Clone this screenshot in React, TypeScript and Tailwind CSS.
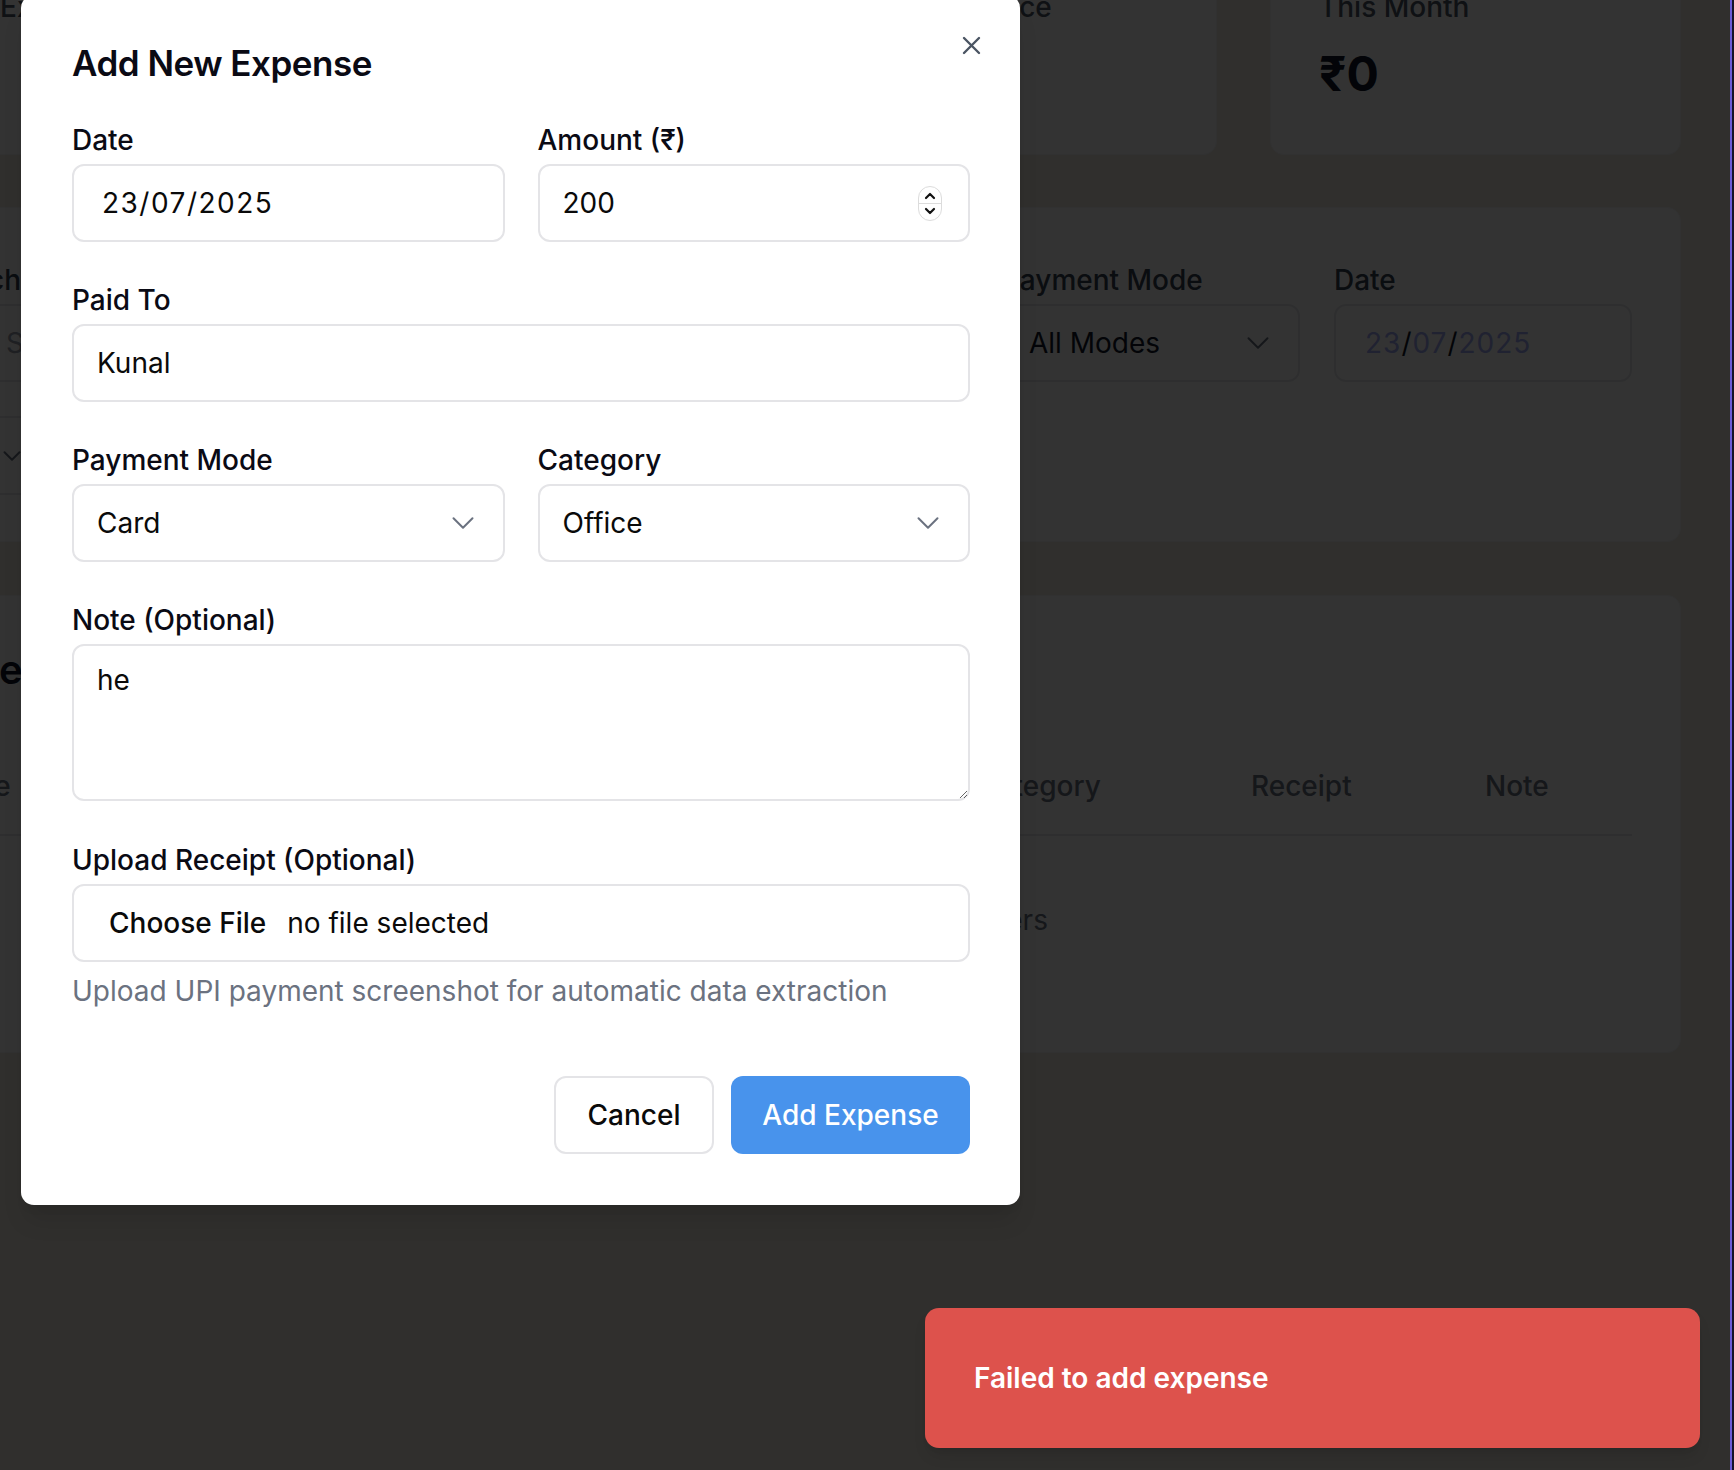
import { ChevronDown, Search } from "lucide-react";

const font = { fontFamily: "Inter, 'Noto Sans', sans-serif" };

function StatCard({ label, value }: { label: string; value: string }) {
  return (
    <div className="bg-white rounded-[14px] border border-gray-100 px-[48px] pt-[48px] pb-[52px]">
      <div className="text-[28px] leading-[40px] font-medium text-gray-600">{label}</div>
      <div className="mt-[19px] text-[48px] leading-[56px] font-bold text-gray-900">{value}</div>
    </div>
  );
}

function Background() {
  const headers = ["Date", "Paid To", "Amount", "Payment Mode", "Category", "Receipt", "Note"];
  return (
    <div className="w-[1803px] ml-[-122px] mt-[-62px] flex flex-col">
      <div className="grid grid-cols-4 gap-[53px]">
        <StatCard label="Total Expenses" value="₹0" />
        <StatCard label="Transactions" value="0" />
        <StatCard label="Wallet Balance" value="₹0" />
        <StatCard label="This Month" value="₹0" />
      </div>

      <div className="mt-[52px] bg-white rounded-[14px] border border-gray-100 px-[48px] pt-[52px] pb-[46px]">
        <div className="grid grid-cols-[1fr_298px_298px_298px] gap-x-[34px] gap-y-[34px]">
          <div>
            <div className="text-[28px] leading-[40px] font-medium text-gray-700 mb-[4px]">Search</div>
            <div className="relative h-[78px] border-2 border-gray-200 rounded-[12px] flex items-center pl-[77px]">
              <Search size={28} className="absolute left-[24px] text-gray-400" />
              <span className="text-[28px] text-gray-400">Search by paid to or note...</span>
            </div>
          </div>
          <div>
            <div className="text-[28px] leading-[40px] font-medium text-gray-700 mb-[4px]">Category</div>
            <div className="h-[78px] border-2 border-gray-200 rounded-[12px] flex items-center justify-between pl-[25px] pr-[21px]">
              <span className="text-[28px] text-gray-900">All Categories</span>
              <ChevronDown size={38} absoluteStrokeWidth strokeWidth={2} className="text-gray-500" />
            </div>
          </div>
          <div>
            <div className="text-[28px] leading-[40px] font-medium text-gray-700 mb-[4px]">Payment Mode</div>
            <div className="h-[78px] border-2 border-gray-200 rounded-[12px] flex items-center justify-between pl-[25px] pr-[21px]">
              <span className="text-[28px] text-gray-900">All Modes</span>
              <ChevronDown size={38} absoluteStrokeWidth strokeWidth={2} className="text-gray-500" />
            </div>
          </div>
          <div>
            <div className="text-[28px] leading-[40px] font-medium text-gray-700 mb-[4px]">Date</div>
            <div className="h-[78px] border-2 border-gray-200 rounded-[12px] flex items-center pl-[29px] text-[28px] tracking-[1px]">
              <span className="text-[#9eaaf5]">23</span>
              <span className="text-gray-900">/</span>
              <span className="text-[#9eaaf5]">07</span>
              <span className="text-gray-900">/</span>
              <span className="text-[#9eaaf5]">2025</span>
            </div>
          </div>
          <div className="w-[132px] h-[79px] border-2 border-gray-200 rounded-[12px] flex items-center justify-end pr-[30px]">
            <ChevronDown size={30} absoluteStrokeWidth strokeWidth={2} className="text-gray-500" />
          </div>
        </div>
      </div>

      <div className="mt-[53px] bg-white rounded-[14px] border border-gray-100 p-[48px]">
        <h2 className="text-[40px] leading-[52px] font-semibold text-gray-900">Expenses</h2>
        <div className="mt-[42px]">
          <div className="grid grid-cols-[257px_257px_257px_257px_274px_234px_171px] border-b-2 border-gray-200">
            {headers.map((h) => (
              <div key={h} className="px-[22px] py-[28px] text-[28px] leading-[40px] font-medium text-gray-500">
                {h}
              </div>
            ))}
          </div>
          <div className="py-[64px] text-center text-[28px] leading-[40px] text-gray-500">
            No expenses found matching your filters
          </div>
        </div>
      </div>
    </div>
  );
}

function Field({ label, children }: { label: string; children: React.ReactNode }) {
  return (
    <div>
      <label className="block text-[28px] leading-[40px] font-medium text-[#0a0a14] mb-[4px]">{label}</label>
      {children}
    </div>
  );
}

const inputCls =
  "w-full h-[78px] border-2 border-[#e4e4e7] rounded-[12px] px-[23px] text-[28px] text-[#0a0a0a] bg-white outline-none";

function SelectBox({ value }: { value: string }) {
  return (
    <div className="relative">
      <select defaultValue={value} className={`${inputCls} appearance-none`}>
        <option>{value}</option>
      </select>
      <ChevronDown
        size={38}
        absoluteStrokeWidth
        strokeWidth={2}
        className="absolute right-[23px] top-[20px] text-[#6b7280] pointer-events-none"
      />
    </div>
  );
}

function Modal() {
  return (
    <div className="absolute left-[21px] top-[-5px] w-[999px] bg-white rounded-[13px] shadow-xl pl-[51px] pr-[50px] pt-[48px] pb-[51px]">
      <button className="absolute right-[39px] top-[41px] text-[#4b5563]">
        <svg width="19" height="19" viewBox="0 0 19 19" fill="none" stroke="currentColor" strokeWidth="2.4" strokeLinecap="round">
          <path d="M2 2 L17 17 M17 2 L2 17" />
        </svg>
      </button>
      <h2 className="text-[35px] leading-[40px] font-semibold text-[#0a0a14] tracking-[-0.5px]">Add New Expense</h2>

      <div className="mt-[37px] flex flex-col gap-[38px]">
        <div className="grid grid-cols-2 gap-x-[33px]">
          <Field label="Date">
            <input readOnly value="23/07/2025" className={`${inputCls} pl-[28px] tracking-[1.5px]`} />
          </Field>
          <Field label="Amount (₹)">
            <div className="relative">
              <input readOnly value="200" className={inputCls} />
              <div className="absolute right-[28px] top-[22px] w-[24px] h-[35px] rounded-full border border-[#dcdcdc] flex flex-col items-center justify-center">
                <svg width="12" height="8" viewBox="0 0 12 8" fill="none" stroke="#111" strokeWidth="2.2" strokeLinecap="round" strokeLinejoin="round">
                  <path d="M2 6 L6 2 L10 6" />
                </svg>
                <div className="w-full h-px bg-[#dcdcdc] my-[3px]" />
                <svg width="12" height="8" viewBox="0 0 12 8" fill="none" stroke="#111" strokeWidth="2.2" strokeLinecap="round" strokeLinejoin="round">
                  <path d="M2 2 L6 6 L10 2" />
                </svg>
              </div>
            </div>
          </Field>
        </div>

        <Field label="Paid To">
          <input readOnly value="Kunal" className={inputCls} />
        </Field>

        <div className="grid grid-cols-2 gap-x-[33px]">
          <Field label="Payment Mode">
            <SelectBox value="Card" />
          </Field>
          <Field label="Category">
            <SelectBox value="Office" />
          </Field>
        </div>

        <Field label="Note (Optional)">
          <textarea
            readOnly
            value="he"
            className="block w-full h-[157px] border-2 border-[#e4e4e7] rounded-[12px] px-[23px] py-[14px] text-[28px] leading-[40px] text-[#0a0a0a] outline-none"
          />
        </Field>

        <div className="mt-[1px]">
          <Field label="Upload Receipt (Optional)">
            <div className="h-[78px] border-2 border-[#e4e4e7] rounded-[12px] flex items-center pl-[35px] text-[28px]">
              <span className="font-medium text-[#0a0a0a]">Choose File</span>
              <span className="ml-[21px] text-[#0a0a0a]">no file selected</span>
            </div>
          </Field>
          <p className="mt-[9px] text-[28px] leading-[40px] text-[#6b7280]">
            Upload UPI payment screenshot for automatic data extraction
          </p>
        </div>
      </div>

      <div className="mt-[65px] flex justify-end gap-[17px]">
        <button className="w-[160px] h-[78px] border-2 border-[#e4e4e7] rounded-[12px] text-[28px] font-medium text-[#0a0a0a] bg-white">
          Cancel
        </button>
        <button className="w-[239px] h-[78px] rounded-[12px] text-[28px] font-medium text-white bg-[#4893ec]">
          Add Expense
        </button>
      </div>
    </div>
  );
}

export default function App() {
  return (
    <div className="w-[1734px] h-[1470px] flex overflow-hidden" style={font}>
      <div className="relative w-[1730px] h-full overflow-hidden bg-[#f0ebe2]">
        <Background />
        <div className="absolute inset-0 bg-black/80" />
        <Modal />
        <div className="absolute left-[925px] top-[1308px] w-[775px] h-[140px] rounded-[14px] bg-[#dd524c] shadow-lg flex items-center pl-[49px]">
          <span className="text-[28px] font-semibold text-white">Failed to add expense</span>
        </div>
      </div>
      <div className="w-[2px] h-full bg-[#6b5bd8]" />
      <div className="w-[2px] h-full bg-[#15132b]" />
    </div>
  );
}
